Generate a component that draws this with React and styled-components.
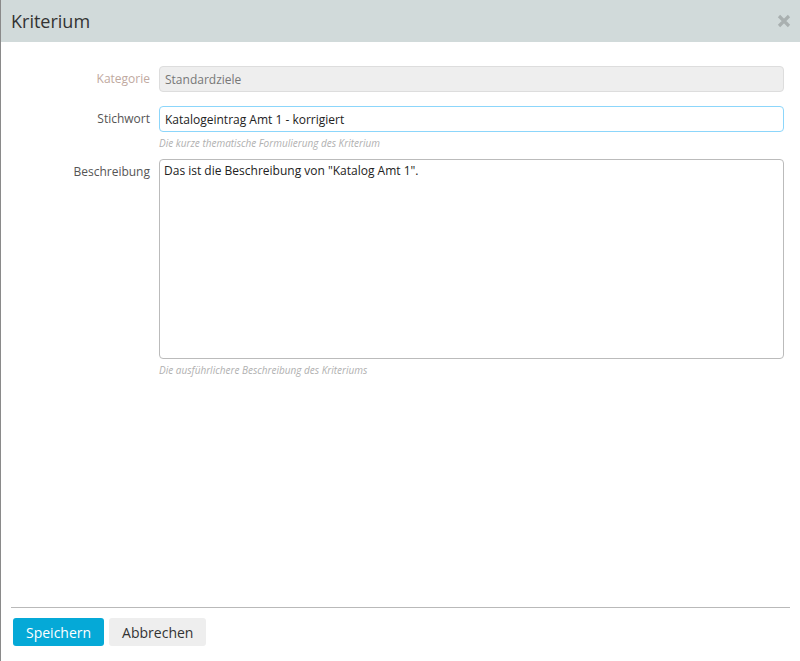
import styled, { createGlobalStyle } from "styled-components";

const GlobalStyle = createGlobalStyle`
  html, body { margin: 0; padding: 0; height: 100%; }
  body { font-family: "Open Sans", "Liberation Sans", sans-serif; background: #fff; }
  #root { height: 100%; }
  * { box-sizing: border-box; }
`;

const Dialog = styled.div`
  height: 661px;
  display: flex;
  flex-direction: column;
  border-left: 1px solid #8a8a8a;
  background: #fff;
`;

const Header = styled.div`
  height: 42px;
  flex: none;
  background: #d1dada;
  display: flex;
  align-items: center;
  justify-content: space-between;
  padding: 0 9px 0 10px;

  h3 {
    margin: 0;
    font-weight: 400;
    font-size: 18px;
    color: #333;
    line-height: 1;
  }
`;

const Close = styled.button`
  border: 0;
  background: none;
  padding: 0;
  width: 14px;
  height: 14px;
  cursor: pointer;
  display: flex;
`;

const Body = styled.div`
  flex: 1;
  padding: 24px 16px 0 0;
  display: flex;
  flex-direction: column;
  gap: 14px;
`;

const Row = styled.div`
  display: grid;
  grid-template-columns: 149px 1fr;
  column-gap: 9px;
`;

const Label = styled.label`
  text-align: right;
  font-size: 12px;
  line-height: 16px;
  padding-top: 5px;
  color: ${(p) => (p.$muted ? "#c0a9a0" : "#555")};
`;

const Field = styled.div`
  display: flex;
  flex-direction: column;
`;

const Input = styled.input`
  height: 26px;
  width: 100%;
  font: inherit;
  font-size: 12px;
  padding: 0 5px;
  color: ${(p) => (p.disabled ? "#777" : "#222")};
  background: ${(p) => (p.disabled ? "#eee" : "#fff")};
  border: 1px solid ${(p) => (p.$focus ? "#8cd6fb" : "#ddd")};
  border-radius: 4px;
  outline: none;
`;

const TextArea = styled.textarea`
  height: 200px;
  width: 100%;
  resize: none;
  font: inherit;
  font-size: 12px;
  line-height: 16px;
  padding: 3px 4px;
  color: #222;
  border: 1px solid #bbb;
  border-radius: 4px;
  outline: none;
`;

const Help = styled.span`
  margin: 5px 0 -4px;
  font-size: 10px;
  font-style: italic;
  color: #b0b0b0;
  line-height: 12px;
`;

const Footer = styled.div`
  flex: none;
  margin: 0 10px 0 10px;
  border-top: 1px solid #b9b9b9;
  padding: 10px 0 15px 2px;
  display: flex;
  gap: 5px;
`;

const Button = styled.button`
  height: 28px;
  padding: 0 13px;
  font-family: inherit;
  font-size: 14px;
  border: 0;
  border-radius: 3px;
  cursor: pointer;
  color: ${(p) => (p.$primary ? "#fff" : "#333")};
  background: ${(p) => (p.$primary ? "#05a9d7" : "#eee")};
`;

export default function App() {
  return (
    <>
      <GlobalStyle />
      <Dialog>
        <Header>
          <h3>Kriterium</h3>
          <Close aria-label="Schließen">
            <svg width="14" height="14" viewBox="0 0 14 14">
              <path d="M2 2 L12 12 M12 2 L2 12" stroke="#a9b0b0" strokeWidth="3.2" strokeLinecap="butt" />
            </svg>
          </Close>
        </Header>
        <Body>
          <Row>
            <Label $muted>Kategorie</Label>
            <Field>
              <Input disabled defaultValue="Standardziele" />
            </Field>
          </Row>
          <Row>
            <Label>Stichwort</Label>
            <Field>
              <Input $focus defaultValue="Katalogeintrag Amt 1 - korrigiert" />
              <Help>Die kurze thematische Formulierung des Kriterium</Help>
            </Field>
          </Row>
          <Row>
            <Label>Beschreibung</Label>
            <Field>
              <TextArea defaultValue={'Das ist die Beschreibung von "Katalog Amt 1".'} />
              <Help>Die ausführlichere Beschreibung des Kriteriums</Help>
            </Field>
          </Row>
        </Body>
        <Footer>
          <Button $primary>Speichern</Button>
          <Button>Abbrechen</Button>
        </Footer>
      </Dialog>
    </>
  );
}
